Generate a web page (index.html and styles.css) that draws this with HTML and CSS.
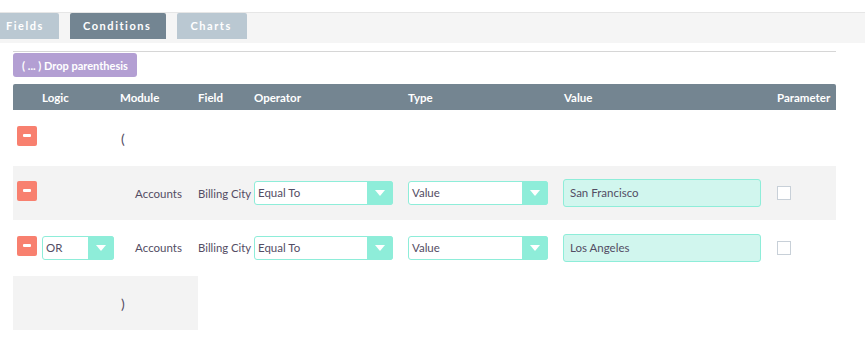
FILE: index.html
```html
<!DOCTYPE html>
<html lang="en">
<head>
<meta charset="UTF-8">
<meta name="viewport" content="width=device-width, initial-scale=1.0">
<title>Conditions</title>
<link rel="stylesheet" href="styles.css">
</head>
<body>

<div class="tabs">
    <div class="tab tab-first">Fields</div>
    <div class="tab active">Conditions</div>
    <div class="tab">Charts</div>
</div>

<div class="panel">
    <button class="drop-btn">( ... ) Drop parenthesis</button>

    <div class="grid head">
        <div></div>
        <div>Logic</div>
        <div>Module</div>
        <div>Field</div>
        <div>Operator</div>
        <div>Type</div>
        <div>Value</div>
        <div>Parameter</div>
    </div>

    <!-- open parenthesis -->
    <div class="grid row row-open">
        <div><span class="minus"></span></div>
        <div></div>
        <div class="paren">(</div>
    </div>

    <div class="grid row row-alt">
        <div><span class="minus"></span></div>
        <div></div>
        <div class="module">Accounts</div>
        <div class="field">Billing City</div>
        <div><div class="select op">Equal To<span class="arrow"></span></div></div>
        <div><div class="select type">Value<span class="arrow"></span></div></div>
        <div><div class="value-input">San Francisco</div></div>
        <div><span class="check"></span></div>
    </div>

    <div class="grid row">
        <div><span class="minus"></span></div>
        <div><div class="select logic">OR<span class="arrow"></span></div></div>
        <div class="module">Accounts</div>
        <div class="field">Billing City</div>
        <div><div class="select op">Equal To<span class="arrow"></span></div></div>
        <div><div class="select type">Value<span class="arrow"></span></div></div>
        <div><div class="value-input">Los Angeles</div></div>
        <div><span class="check"></span></div>
    </div>

    <!-- close parenthesis -->
    <div class="grid row row-close">
        <div></div>
        <div></div>
        <div class="paren">)</div>
    </div>
</div>

</body>
</html>
```

FILE: styles.css
```css
body {
    font-family: Lato, "Open Sans", sans-serif;
    color: #534d64;
    background-color: #fff;
    margin: 0;
    padding: 0;
    overflow: hidden;
}
.tabs {
    display: flex;
    gap: 11px;
    margin-top: 12px;
    border-top: 1px solid #e6e6e6;
    background-color: #f5f5f5;
    padding-bottom: 4px;
}
.tab {
    height: 26px;
    line-height: 26px;
    padding: 0 15px 0 13px;
    background-color: #bac8d2;
    color: #fff;
    font-size: 11px;
    font-weight: bold;
    letter-spacing: 1.55px;
    border-radius: 2px 2px 0 0;
}
.tab-first {
    margin-left: -7px;
}
.tab.active {
    background-color: #738592;
}
.panel {
    margin: 8px 0 0 13px;
    width: 823px;
    border-top: 1px solid #d6d6d6;
    padding-top: 1px;
}
.drop-btn {
    display: block;
    height: 24px;
    width: 124px;
    padding: 0;
    border: none;
    border-radius: 3px;
    background-color: #b39fd3;
    color: #fff;
    font-family: Lato, sans-serif;
    font-size: 11px;
    font-weight: bold;
    margin-bottom: 7px;
}
.grid {
    display: grid;
    grid-template-columns: 27px 78px 78px 56px 154px 156px 213px 61px;
    align-items: center;
}
.grid > div {
    padding-left: 2px;
    font-size: 11.5px;
    white-space: nowrap;
}
.head {
    height: 26px;
    background-color: #748591;
    color: #fff;
    font-weight: bold;
    border-radius: 2px 2px 0 0;
}
.row {
    height: 55px;
}
.row-open {
    height: 56px;
}
.row-alt {
    height: 54px;
    background-color: #f3f3f3;
}
.row-close {
    height: 54px;
    width: 185px;
    margin-top: 1px;
    background-color: #f3f3f3;
    grid-template-columns: 27px 78px 80px;
}
.grid > div:first-child {
    padding-left: 4px;
}
.minus {
    display: block;
    position: relative;
    width: 20px;
    height: 20px;
    margin-bottom: 4px;
    border-radius: 2px;
    background-color: #f8806f;
}
.minus::after {
    content: "";
    position: absolute;
    left: 6px;
    top: 8px;
    width: 8px;
    height: 3px;
    border-radius: 1px;
    background-color: #fff;
}
.grid > .paren {
    font-size: 14px;
    padding-left: 3px;
}
.grid > .module {
    text-align: center;
    padding-left: 3px;
}
.grid > .field {
    font-size: 11.3px;
}
.select {
    position: relative;
    height: 22px;
    line-height: 22px;
    border: 1px solid #8eedd9;
    border-radius: 3px;
    background-color: #fff;
    padding-left: 3px;
    font-size: 11.5px;
}
.select.logic {
    width: 67px;
}
.select.op {
    width: 134px;
}
.select.type {
    width: 135px;
}
.arrow {
    position: absolute;
    right: -1px;
    top: -1px;
    width: 26px;
    height: 24px;
    border-radius: 0 3px 3px 0;
    background-color: #8eedd9;
}
.arrow::after {
    content: "";
    position: absolute;
    left: 8px;
    top: 9px;
    border-left: 5px solid transparent;
    border-right: 5px solid transparent;
    border-top: 6px solid #fff;
}
.value-input {
    width: 190px;
    height: 26px;
    line-height: 26px;
    margin-left: -1px;
    padding-left: 6px;
    border: 1px solid #8eedd9;
    border-radius: 3px;
    background-color: #d1f6ee;
    font-size: 11.5px;
}
.check {
    display: block;
    width: 12px;
    height: 12px;
    border: 1px solid #c8d0d8;
    background-color: #fff;
}
```
